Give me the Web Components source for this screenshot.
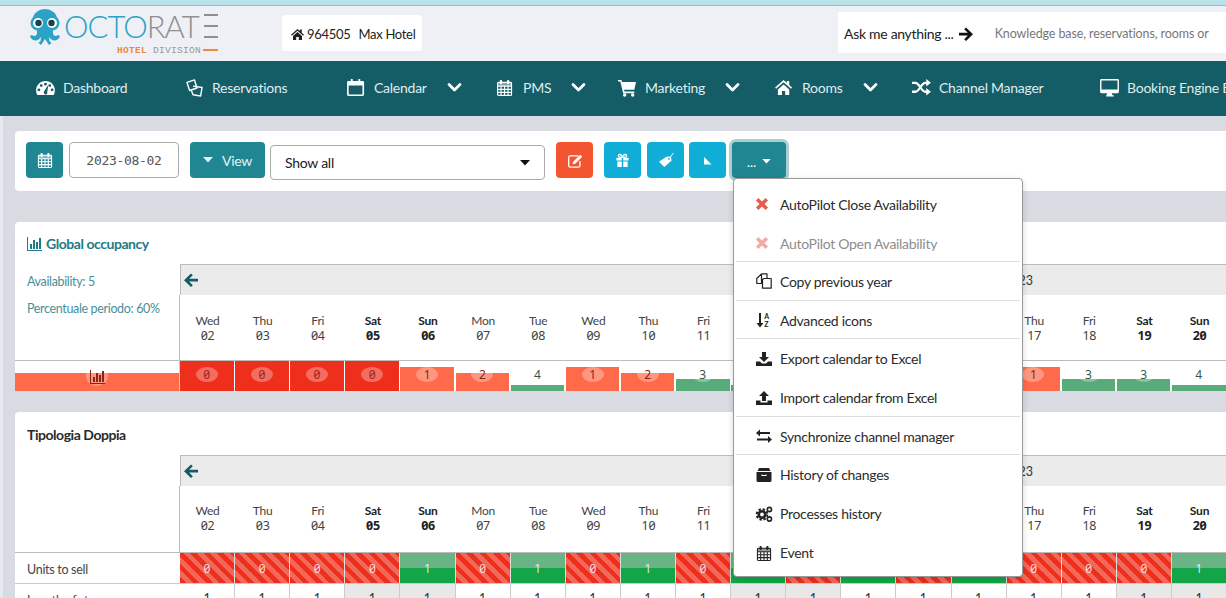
<!DOCTYPE html>
<html lang="en">
<head>
<meta charset="utf-8">
<title>Octorate calendar</title>
<style>
  html, body { margin: 0; height: 598px; overflow: hidden; }
  body { background: linear-gradient(90deg, #e6e9ed 3px, #d8dbe2 3px); font-family: Lato, "Liberation Sans", sans-serif; font-size: 14px; color: #333; }
</style>
</head>
<body>
<oct-topbar></oct-topbar>
<oct-nav>
  <oct-nav-item icon="gauge" width="149">Dashboard</oct-nav-item>
  <oct-nav-item icon="cards" width="162">Reservations</oct-nav-item>
  <oct-nav-item icon="calOutline" width="149" chevron>Calendar</oct-nav-item>
  <oct-nav-item icon="calGrid" width="122" chevron>PMS</oct-nav-item>
  <oct-nav-item icon="cart" width="157" chevron>Marketing</oct-nav-item>
  <oct-nav-item icon="home" width="137" chevron>Rooms</oct-nav-item>
  <oct-nav-item icon="random" width="188">Channel Manager</oct-nav-item>
  <oct-nav-item icon="desktop" width="160">Booking Engine Express</oct-nav-item>
</oct-nav>
<oct-toolbar>
  <oct-menu slot="menu">
    <oct-menu-item icon="times" tone="danger">AutoPilot Close Availability</oct-menu-item>
    <oct-menu-item icon="times" tone="disabled">AutoPilot Open Availability</oct-menu-item>
    <oct-menu-item icon="copy" divider>Copy previous year</oct-menu-item>
    <oct-menu-item icon="sortAz" divider>Advanced icons</oct-menu-item>
    <oct-menu-item icon="download" divider>Export calendar to Excel</oct-menu-item>
    <oct-menu-item icon="upload">Import calendar from Excel</oct-menu-item>
    <oct-menu-item icon="exchange" divider>Synchronize channel manager</oct-menu-item>
    <oct-menu-item icon="archive" divider>History of changes</oct-menu-item>
    <oct-menu-item icon="cogs">Processes history</oct-menu-item>
    <oct-menu-item icon="calGrid">Event</oct-menu-item>
  </oct-menu>
</oct-toolbar>
<oct-calendar kind="global" heading="Global occupancy"></oct-calendar>
<oct-calendar kind="room" heading="Tipologia Doppia"></oct-calendar>

<script>
const ICONS = {
  gauge: '<path fill="currentColor" fill-rule="evenodd" d="M10 2C4.5 2 0 6.5 0 12c0 1.800.5 3.500 1.300 5h17.400c.8-1.500 1.300-3.200 1.300-5 0-5.500-4.500-10-10-10zM3 13a1.500 1.500 0 1 1 0-3 1.500 1.500 0 0 1 0 3zm2.500-4.500a1.500 1.500 0 1 1 0-3 1.500 1.500 0 0 1 0 3zM10 7a1.500 1.500 0 1 1 0-3 1.500 1.500 0 0 1 0 3zm4.500 1.500a1.500 1.500 0 1 1 0-3 1.500 1.500 0 0 1 0 3zM17 13a1.500 1.500 0 1 1 0-3 1.500 1.500 0 0 1 0 3zm-5.300 2.600a2 2 0 0 1-3.400-2L12 7.500l.8.300-1 6.200c.2.500.1 1.100-.1 1.600z"/>',
  cards: '<g fill="none" stroke="currentColor" stroke-width="1.500" stroke-linejoin="round"><path d="M2 3.500 10 1l2.600 8.500-7.800 2.700z"/><path d="M8.500 7.500 18 9l-1.500 9-8-1.300-2-4.700"/></g>',
  calOutline: '<path fill="currentColor" fill-rule="evenodd" d="M4 0h2v2h6V0h2v2h2.500A1.500 1.500 0 0 1 18 3.500v13a1.500 1.500 0 0 1-1.500 1.500h-15A1.500 1.500 0 0 1 0 16.500v-13A1.500 1.500 0 0 1 1.500 2H4zM1.700 7v9.300h14.600V7z"/>',
  calGrid: '<g fill="none" stroke="currentColor" stroke-width="1.200"><rect x="1.600" y="3.600" width="14.800" height="13.800" rx="1"/><path d="M1.600 7.500h14.800M1.600 11h14.800M1.600 14.200h14.800M5.300 7.500v9.900M9 7.500v9.900M12.700 7.500v9.900"/></g><path fill="currentColor" d="M1.600 3.600h14.800v3.900H1.600z" opacity=".45"/><rect x="4" y="1" width="2.400" height="4.500" rx="1" fill="currentColor"/><rect x="11.600" y="1" width="2.400" height="4.500" rx="1" fill="currentColor"/>',
  cart: '<path fill="currentColor" d="M0 1h3.600l.6 2.200H19l-1.800 8.300H6.300l.5 1.800h10.400v1.700H5.400L2.400 2.700H0z"/><circle cx="7" cy="17" r="1.800" fill="currentColor"/><circle cx="15.500" cy="17" r="1.800" fill="currentColor"/>',
  home: '<path fill="currentColor" d="M9 1 0 9l1.100 1.300L9 3.400l7.900 6.900L18 9l-3-2.700V2h-2.500v2.100zM3 11l6-5.200 6 5.200v6h-4.300v-4.300H7.300V17H3z"/>',
  homeSmall: '<path fill="currentColor" d="M6.500 1 0 6.800l.8.900 5.700-5 5.700 5 .8-.9-2.200-2V1.500H9v1.600zM2 8l4.500-3.900L11 8v4H7.800V9H5.200v3H2z"/>',
  random: '<g fill="none" stroke="currentColor" stroke-width="2.400"><path d="M0 4h3.500c4.500 0 6 9.500 10.500 9.500h1.500"/><path d="M0 13.500h3.500c4.500 0 6-9.500 10.500-9.500h1.500"/></g><path fill="currentColor" d="M15 0l5 4-5 4zM15 9.500l5 4-5 4z"/>',
  desktop: '<path fill="currentColor" fill-rule="evenodd" d="M1.500 0h17A1.500 1.500 0 0 1 20 1.500v12a1.500 1.500 0 0 1-1.500 1.500h-6l.5 2.300h1.500V18.500h-8v-1.200H7L7.500 15h-6A1.500 1.500 0 0 1 0 13.500v-12A1.500 1.500 0 0 1 1.500 0zm0 1.500V11h17V1.500z"/>',
  chevron: '<path fill="none" stroke="currentColor" stroke-width="2.800" stroke-linecap="round" stroke-linejoin="round" d="M2 3.500 7.500 9 13 3.500"/>',
  caret: '<path fill="currentColor" d="M0 0h10L5 5.500z"/>',
  edit: '<path fill="none" stroke="currentColor" stroke-width="1.400" d="M11.500 3H3A1.700 1.700 0 0 0 1.300 4.700v8.600A1.700 1.700 0 0 0 3 15h8.600a1.700 1.700 0 0 0 1.700-1.700V8.500"/><path fill="currentColor" d="M6 9.200 13.500 1.800l2.200 2.200-7.400 7.500-2.900.6z"/>',
  gift: '<path fill="currentColor" d="M1 5h5.700v3H1zM8.300 5H14v3H8.300zM2 9h4.700v6H2zM8.300 9H13v6H8.300z"/><path fill="none" stroke="currentColor" stroke-width="1.400" d="M7.500 4.600C6.500 1 3.400.8 3.200 2.800c-.2 1.700 2 1.900 4.300 1.800zM7.500 4.600C8.500 1 11.600.8 11.800 2.800c.2 1.700-2 1.900-4.300 1.800z"/>',
  tag: '<path fill="currentColor" fill-rule="evenodd" d="M9 4.500l4.500-.2 1 4.300-7.800 6.800L1 9.800zm2.800 1a1.100 1.100 0 1 0 0 2.200 1.100 1.100 0 0 0 0-2.200z"/><path fill="none" stroke="currentColor" stroke-width="1" d="M12 6.500 16.500.5"/>',
  corner: '<path fill="currentColor" d="M1 1v7.500h7.500z"/>',
  times: '<path fill="none" stroke="currentColor" stroke-width="2.900" d="M2 2l8 8M10 2l-8 8"/>',
  copy: '<g fill="none" stroke="currentColor" stroke-width="1.200" stroke-linejoin="round"><path d="M5.500.8H11v4.700M.8 5.500 5.500.8v9.700H.8z"/><path d="M8 5.500h7.200v9.700H6.500V6.500z"/></g>',
  sortAz: '<path fill="currentColor" d="M3 1h2v10h2.500L4 15.500.5 11H3z"/><text x="8.300" y="6.500" font-size="7" font-family="Lato, sans-serif" font-weight="700" fill="currentColor">A</text><text x="8.300" y="15" font-size="7" font-family="Lato, sans-serif" font-weight="700" fill="currentColor">Z</text>',
  download: '<path fill="currentColor" d="M6 1h4v5h3L8 11 3 6h3zM0 10.500h4l2 2h4l2-2h4V15H0z"/>',
  upload: '<path fill="currentColor" d="M8 1l5 5h-3v5H6V6H3zM0 10.500h4.500v2h7v-2H16V15H0z"/>',
  exchange: '<path fill="currentColor" d="M4 1.500V4h10v2H4v2.500L0 5zM12 8v2.500H1v2h11V15l4-3.500z"/>',
  archive: '<path fill="currentColor" fill-rule="evenodd" d="M3 1h10l1.500 3H1.500zM.5 5h15v8.500a1.500 1.500 0 0 1-1.500 1.500H2a1.500 1.500 0 0 1-1.500-1.500zm5 2.500v1.500h5V7.500h-1V8h-3v-.5z"/>',
  cogs: '<circle cx="6" cy="8.500" r="3.200" fill="none" stroke="currentColor" stroke-width="2.600"/><circle cx="6" cy="8.500" r="5.300" fill="none" stroke="currentColor" stroke-width="2" stroke-dasharray="2.400 1.760"/><circle cx="13.400" cy="3.500" r="2.100" fill="none" stroke="currentColor" stroke-width="1.600"/><circle cx="13.400" cy="13" r="2.100" fill="none" stroke="currentColor" stroke-width="1.600"/>',
  arrowLeft: '<path fill="currentColor" d="M7 .5 8.800 2.300 5.200 5.800H14v2.800H5.200l3.600 3.600L7 14 0 7.200z"/>',
  arrowRight: '<path fill="currentColor" d="M7 .5 5.200 2.300l3.600 3.500H0v2.800h8.800l-3.600 3.600L7 14l7-6.800z"/>',
  bars: '<path fill="currentColor" d="M0 1h1v13h14v1H0zM3 8h2v5H3zM6 4h2v9H6zM9 6h2v7H9zM12 2h2v11h-2z"/>'
};

class OctIcon extends HTMLElement {
  connectedCallback() {
    const size = this.getAttribute("size") || 16;
    const box = this.getAttribute("box") || "0 0 20 18";
    const root = this.shadowRoot || this.attachShadow({ mode: "open" });
    root.innerHTML = `
      <style>
        :host { display: inline-flex; align-items: center; justify-content: center; flex: none; }
        svg { display: block; overflow: visible; }
      </style>
      <svg width="${size}" height="${this.getAttribute("h") || size}" viewBox="${box}">${ICONS[this.getAttribute("name")] || ""}</svg>`;
  }
}
customElements.define("oct-icon", OctIcon);

class OctTopbar extends HTMLElement {
  constructor() {
    super();
    this.attachShadow({ mode: "open" });
    this.shadowRoot.innerHTML = `
      <style>
        :host { display: block; background: #eef0f5; border-top: 5px solid #b8e2e7; box-shadow: inset 0 1px 0 #8fbfc6; height: 56px; }
        .row { display: flex; align-items: center; height: 56px; padding-left: 30px; }
        .logo { display: flex; gap: 4px; width: 188px; height: 48px; margin-right: 64px; flex: none; }
        .logo svg { flex: none; }
        .text { width: 154px; flex: none; }
        .word { display: flex; align-items: center; height: 26px; margin-top: 4px; font-weight: 300; font-size: 31px; letter-spacing: -1px; line-height: 26px; color: #8f8f8f; }
        .word b { font-weight: 300; color: #2aa3c6; }
        .bars { margin-left: auto; flex: none; width: 14px; height: 24px; display: flex; flex-direction: column; justify-content: space-between; }
        .bars i { display: block; height: 2px; background: #8f8f8f; }
        .sub { display: flex; align-items: center; justify-content: flex-end; font-size: 9.500px; height: 12px; margin-top: 5px; letter-spacing: .3px; color: #999; font-family: "Liberation Mono", monospace; }
        .sub b { color: #ee8a3a; font-weight: 700; margin-right: 6px; }
        .sub i { display: block; width: 15px; height: 2px; background: #ee8a3a; margin-left: 2px; }
        .hotel { display: flex; align-items: center; box-sizing: border-box; background: #fff; border-radius: 4px; width: 140px; height: 36px; padding: 2px 0 0 9px; font-size: 13px; letter-spacing: -.3px; color: #222; }
        .hotel oct-icon { margin-right: 3px; }
        .hotel span { margin-left: 8px; }
        .ask { margin-left: auto; display: flex; align-items: center; box-sizing: border-box; width: 388px; height: 41px; margin-top: -1px; padding: 2px 0 0 6px; background: #fff; overflow: hidden; white-space: nowrap; }
        .ask span { font-size: 14px; letter-spacing: -.3px; color: #222; }
        .ask oct-icon { margin: 0 22px 0 5px; color: #111; }
        .ask em { font-style: normal; font-size: 12.500px; letter-spacing: -.1px; color: #777; }
      </style>
      <div class="row">
        <div class="logo">
          <svg width="30" height="36" viewBox="0 0 30 36">
            <g fill="#2aa3c6">
              <ellipse cx="15" cy="10" rx="12" ry="10"/>
              <circle cx="8" cy="14" r="7.500"/><circle cx="22" cy="14" r="7.500"/>
              <path d="M7 19h16v5c0 3 3 4 5 2l2 1c-1 5-8 6-10 2l-1-1 .5 4 2 2-2.500 2-4-6-4 6-2.500-2 2-2 .5-4-1 1c-2 4-9 3-10-2l2-1c2 2 5 1 5-2z"/>
            </g>
            <circle cx="8" cy="14" r="5" fill="#fff"/><circle cx="22" cy="14" r="5" fill="#fff"/>
            <circle cx="8.500" cy="14" r="3.200" fill="#17424f"/><circle cx="21.500" cy="14" r="3.200" fill="#17424f"/>
          </svg>
          <div class="text">
            <div class="word"><b>OCTO</b>RAT<span class="bars"><i></i><i></i><i></i></span></div>
            <div class="sub"><b>HOTEL</b>DIVISION<i></i></div>
          </div>
        </div>
        <div class="hotel"><oct-icon name="homeSmall" size="13" box="0 0 13 13"></oct-icon>964505<span>Max Hotel</span></div>
        <div class="ask"><span>Ask me anything ...</span><oct-icon name="arrowRight" size="14" box="0 0 14 14"></oct-icon><em>Knowledge base, reservations, rooms or</em></div>
      </div>`;
  }
}
customElements.define("oct-topbar", OctTopbar);

class OctNav extends HTMLElement {
  constructor() {
    super();
    this.attachShadow({ mode: "open" });
    this.shadowRoot.innerHTML = `
      <style>
        :host { display: flex; align-items: center; box-sizing: border-box; height: 55px; padding: 0 0 3px 36px; background: #155d66; overflow: hidden; white-space: nowrap; }
      </style>
      <slot></slot>`;
  }
}
customElements.define("oct-nav", OctNav);

class OctNavItem extends HTMLElement {
  connectedCallback() {
    const root = this.shadowRoot || this.attachShadow({ mode: "open" });
    root.innerHTML = `
      <style>
        :host { display: flex; align-items: center; flex: none; color: #dfecee; font-size: 14px; letter-spacing: -.25px; }
        .ic { width: 27px; flex: none; display: flex; color: #fff; }
        .ch { margin-left: 20px; color: #fff; }
      </style>
      <span class="ic"><oct-icon name="${this.getAttribute("icon")}" size="19" h="17"></oct-icon></span>
      <slot></slot>
      ${this.hasAttribute("chevron") ? '<oct-icon class="ch" name="chevron" size="15" h="12" box="0 0 15 12"></oct-icon>' : ""}`;
    this.style.width = this.getAttribute("width") + "px";
  }
}
customElements.define("oct-nav-item", OctNavItem);

class OctToolbar extends HTMLElement {
  constructor() {
    super();
    this.attachShadow({ mode: "open" });
    this.shadowRoot.innerHTML = `
      <style>
        :host { display: block; position: relative; z-index: 5; margin: 15px 0 31px 15px; height: 60px; background: #fff; border-radius: 4px 0 0 4px; }
        .row { display: flex; align-items: flex-start; padding: 11px 0 0 11px; }
        .btn { display: flex; align-items: center; justify-content: center; height: 36px; border-radius: 4px; color: #fff; box-sizing: border-box; }
        .teal { background: #1f8692; }
        .blue { background: #10aed7; width: 37px; margin-left: 6px; }
        .blue.tight { margin-left: 5px; }
        .date { box-sizing: border-box; width: 110px; height: 36px; margin: 0 11px 0 6px; border: 1px solid #aaa; border-radius: 4px; display: flex; align-items: center; justify-content: center; font: 13px "DejaVu Sans Mono", monospace; color: #555; letter-spacing: -.3px; }
        .view { width: 75px; gap: 9px; font-size: 14px; letter-spacing: -.25px; color: #e4f2f3; }
        .select { box-sizing: border-box; width: 275px; height: 35px; margin: 3px 11px 0 5px; padding: 0 14px; display: flex; align-items: center; justify-content: space-between; border: 1px solid #aaa; border-radius: 4px; font-size: 14px; letter-spacing: -.25px; color: #222; }
        .select oct-icon { color: #111; }
        .red { background: #f45531; width: 37px; margin-right: 5px; }
        .more { position: relative; width: 54px; margin-left: 6px; gap: 6px; box-shadow: 0 0 0 3px #a9ced4; padding-top: 3px; font-size: 13px; }
        ::slotted([slot="menu"]) { position: absolute; left: 718px; top: 47px; }
      </style>
      <div class="row">
        <div class="btn teal" style="width:37px"><oct-icon name="calGrid" size="16" h="16" box="0 0 18 18"></oct-icon></div>
        <div class="date">2023-08-02</div>
        <div class="btn teal view"><oct-icon name="caret" size="10" h="6" box="0 0 10 6"></oct-icon>View</div>
        <div class="select">Show all<oct-icon name="caret" size="10" h="6" box="0 0 10 6"></oct-icon></div>
        <div class="btn red"><oct-icon name="edit" size="16" h="15" box="0 0 16 16"></oct-icon></div>
        <div class="btn blue"><oct-icon name="gift" size="15" box="0 0 15 16"></oct-icon></div>
        <div class="btn blue"><oct-icon name="tag" size="16" box="0 0 17 16"></oct-icon></div>
        <div class="btn blue tight"><oct-icon name="corner" size="9" box="0 0 9 9"></oct-icon></div>
        <div class="btn teal more">...<oct-icon name="caret" size="9" h="5" box="0 0 10 6"></oct-icon></div>
      </div>
      <slot name="menu"></slot>`;
  }
}
customElements.define("oct-toolbar", OctToolbar);

class OctMenu extends HTMLElement {
  constructor() {
    super();
    this.attachShadow({ mode: "open" });
    this.shadowRoot.innerHTML = `
      <style>
        :host { display: block; box-sizing: border-box; width: 290px; height: 399px; padding: 4.600px 2px 0; background: #fff; border: 1px solid #999; border-radius: 4px; box-shadow: 0 2px 6px rgba(0,0,0,.15); }
      </style>
      <slot></slot>`;
  }
}
customElements.define("oct-menu", OctMenu);

class OctMenuItem extends HTMLElement {
  connectedCallback() {
    const root = this.shadowRoot || this.attachShadow({ mode: "open" });
    const tone = this.getAttribute("tone");
    root.innerHTML = `
      <style>
        :host { display: flex; align-items: center; box-sizing: border-box; height: 38.700px; padding: 3px 0 0 20px; font-size: 14px; letter-spacing: -.3px; color: #2b2b2b; white-space: nowrap; }
        :host([divider]) { border-top: 1px solid #ddd; padding-top: 1px; }
        :host([tone="disabled"]) { color: #8d8d8d; }
        .ic { width: 24px; flex: none; display: flex; justify-content: flex-start; color: #222; }
        :host([tone="danger"]) .ic { color: #e85c4e; }
        :host([tone="disabled"]) .ic { color: #f2aaa3; }
      </style>
      <span class="ic">${tone
        ? '<oct-icon name="times" size="12" box="1 1 10 10"></oct-icon>'
        : `<oct-icon name="${this.getAttribute("icon")}" size="16" box="0 0 ${this.getAttribute("icon") === "calGrid" ? "18 18" : "16 16"}"></oct-icon>`}</span>
      <slot></slot>`;
  }
}
customElements.define("oct-menu-item", OctMenuItem);

// one bar of the occupancy row: height follows the free rooms
class OctBar extends HTMLElement {
  connectedCallback() {
    const root = this.shadowRoot || this.attachShadow({ mode: "open" });
    const v = Number(this.getAttribute("value"));
    const height = [30, 24, 18, 12, 6][v];
    const color = v === 0 ? "#ee2f1c" : v < 3 ? "#ff6b4a" : "#5aab7a";
    const ink = v === 0 ? "#a3261a" : v < 3 ? "#8e2415" : "#33584a";
    root.innerHTML = `
      <style>
        :host { display: block; position: relative; height: 30px; margin-right: 1.500px; }
        .fill { position: absolute; left: 0; right: 0; bottom: 0; height: ${height}px; background: ${color}; }
        .val { position: absolute; left: 50%; top: 6px; width: 22px; height: 15px; margin-left: -11px; border-radius: 50%; background: rgba(255,255,255,.3); color: ${ink}; font: 12px/16px "Noto Sans", sans-serif; font-feature-settings: "zero"; text-align: center; }
      </style>
      <div class="fill"></div>
      <div class="val">${v}</div>`;
  }
}
customElements.define("oct-bar", OctBar);

const DAYS = [["Wed","02"],["Thu","03"],["Fri","04"],["Sat","05"],["Sun","06"],["Mon","07"],["Tue","08"],["Wed","09"],["Thu","10"],["Fri","11"],["Sat","12"],["Sun","13"],["Mon","14"],["Tue","15"],["Wed","16"],["Thu","17"],["Fri","18"],["Sat","19"],["Sun","20"]];
const OCCUPANCY = [0,0,0,0,1,2,4,1,2,3,4,3,2,3,4,1,3,3,4];
const UNITS = [0,0,0,0,1,0,1,0,1,0,1,0,1,0,1,0,0,0,1];

class OctCalendar extends HTMLElement {
  connectedCallback() {
    const root = this.shadowRoot || this.attachShadow({ mode: "open" });
    const global = this.getAttribute("kind") === "global";
    const isWeekend = (d) => d[0] === "Sat" || d[0] === "Sun";
    const dayCells = DAYS.map((d) => `<div class="day${isWeekend(d) ? " we" : ""}">${d[0]}<span>${d[1]}</span></div>`).join("");
    const rows = global
      ? `<div class="left-bar"><div class="fill"></div><div class="pill"><oct-icon name="bars" size="15" box="0 0 15 15"></oct-icon></div></div>
         ${OCCUPANCY.map((v) => `<oct-bar value="${v}"></oct-bar>`).join("")}`
      : `<div class="label">Units to sell</div>
         ${UNITS.map((v) => `<div class="unit ${v ? "ok" : "no"}">${v}</div>`).join("")}
         <div class="label line">Length of stay</div>
         ${DAYS.map((d) => `<div class="stay${isWeekend(d) ? " we" : ""}">1</div>`).join("")}`;
    root.innerHTML = `
      <style>
        :host { display: block; margin: 0 0 ${global ? 21 : 0}px 15px; background: #fff; border-radius: 4px 0 0 0; overflow: hidden; }
        .title { display: flex; align-items: center; gap: 4px; box-sizing: border-box; height: ${global ? 42 : 43}px; padding: ${global ? 0 : 2}px 0 0 12px; font-size: 14px; letter-spacing: -.45px; font-weight: 700; color: ${global ? "#1f7a86" : "#2b2b2b"}; }
        .grid { display: grid; grid-template-columns: 165px repeat(19, 55.110px); grid-auto-rows: auto; }
        .side { grid-column: 1; grid-row: 1 / span 2; padding: 4px 0 0 12px; font-size: 12.500px; letter-spacing: -.35px; color: #4a8f98; line-height: 27px; }
        .strip { grid-column: 2 / -1; box-sizing: border-box; height: 31px; display: flex; align-items: center; justify-content: space-between; padding: 0 194px 0 3px; background: #ebebeb; border-top: 1px solid #bbb; border-left: 1px solid #bbb; color: #155d66; font-size: 12.500px; }
        .strip span { color: #333; }
        .days { grid-column: 2 / -1; display: grid; grid-template-columns: subgrid; height: ${global ? 65 : 66}px; border-left: 1px solid #bbb; margin-left: -1px; }
        .day { display: flex; flex-direction: column; align-items: center; justify-content: center; padding: ${global ? "1px 0 0" : "0 0 2px"}; font-size: 12px; letter-spacing: -.2px; line-height: 15px; color: #444; }
        .day span { font-family: "Noto Sans", sans-serif; font-feature-settings: "zero"; font-size: 12.500px; letter-spacing: -.3px; }
        .day.we { font-weight: 700; color: #222; }
        .rows { grid-column: 1 / -1; display: grid; grid-template-columns: subgrid; border-top: 1px solid #bbb; }
        .left-bar { position: relative; height: 30px; border-right: 1px solid #ccc; box-sizing: border-box; }
        .left-bar .fill { position: absolute; left: 0; right: 0; bottom: 0; height: 18px; background: #ff6b4a; }
        .pill { position: absolute; left: 71px; top: 5px; width: 22px; height: 20px; border-radius: 50%; background: rgba(255,255,255,.3); color: #8e2415; display: flex; align-items: center; justify-content: center; }
        .label { height: 30px; line-height: 33px; padding-left: 12px; font-size: 12.500px; letter-spacing: -.3px; color: #444; }
        .line { border-top: 1px solid #ccc; }
        .unit { height: 30px; text-align: center; font: 12px/32px "Noto Sans", sans-serif; font-feature-settings: "zero"; color: rgba(255,255,255,.8); border-right: 1px solid #ddd; box-sizing: border-box; }
        .unit.no { background: repeating-linear-gradient(45deg, #ee2f1c 0 4.700px, #f2695c 4.700px 9.400px); }
        .unit.ok { background: linear-gradient(#69b387 0 15px, #13a648 15px); }
        .stay { height: 30px; border-top: 1px solid #ccc; border-right: 1px solid #ccc; box-sizing: border-box; text-align: center; line-height: 30px; font-size: 12.500px; color: #333; }
        .stay.we { background: #e8e8e8; }
      </style>
      <div class="title">${global ? '<oct-icon name="bars" size="15" box="0 0 15 15"></oct-icon>' : ""}${this.getAttribute("heading")}</div>
      <div class="grid">
        <div class="side">${global ? "Availability: 5<br>Percentuale periodo: 60%" : ""}</div>
        <div class="strip"><oct-icon name="arrowLeft" size="14" box="0 0 14 14"></oct-icon><span>August 2023</span></div>
        <div class="days">${dayCells}</div>
        <div class="rows">${rows}</div>
      </div>`;
  }
}
customElements.define("oct-calendar", OctCalendar);
</script>
</body>
</html>
